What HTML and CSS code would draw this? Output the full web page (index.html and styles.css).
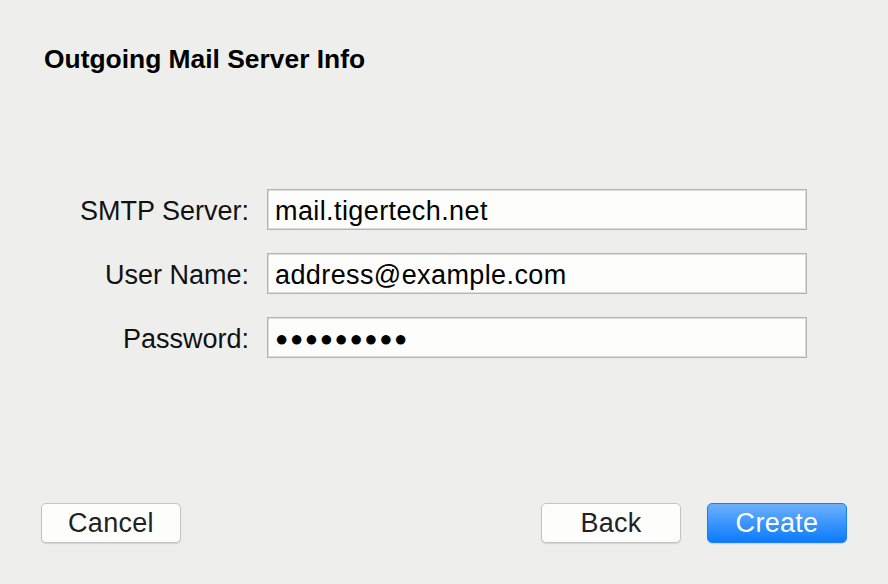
FILE: index.html
```html
<!DOCTYPE html>
<html lang="en">
<head>
    <meta charset="UTF-8">
    <title>Outgoing Mail Server Info</title>
    <link rel="stylesheet" href="styles.css">
</head>
<body>
    <div class="sheet">
        <h1 class="sheet-title">Outgoing Mail Server Info</h1>
        <div class="form">
            <label class="form-label">SMTP Server:</label>
            <div class="form-field">mail.tigertech.net</div>
            <label class="form-label">User Name:</label>
            <div class="form-field">address@example.com</div>
            <label class="form-label">Password:</label>
            <div class="form-field form-password">&#9679;&#9679;&#9679;&#9679;&#9679;&#9679;&#9679;&#9679;&#9679;</div>
        </div>
        <div class="sheet-buttons">
            <button class="btn">Cancel</button>
            <div class="btn-group">
                <button class="btn">Back</button>
                <button class="btn btn-primary">Create</button>
            </div>
        </div>
    </div>
</body>
</html>
```

FILE: styles.css
```css
html, body {
    margin: 0;
    background-color: #eeefed;
}
.sheet {
    width: 888px;
    height: 584px;
    box-sizing: border-box;
    padding: 42px 41px 0 44px;
    font-family: "Liberation Sans", Arial, sans-serif;
    color: #111;
}
.sheet-title {
    margin: 0;
    font-size: 26.4px;
    line-height: 34px;
    font-weight: bold;
    color: #000;
}
.form {
    margin-top: 113px;
    display: grid;
    grid-template-columns: 205px 540px;
    column-gap: 18px;
    row-gap: 23px;
    align-items: center;
}
.form-label {
    text-align: right;
    font-size: 27px;
    padding-top: 4px;
}
.form-field {
    height: 41px;
    box-sizing: border-box;
    border: 1px solid #b4b5b3;
    box-shadow: inset 0 0 0 1px #dcdcda;
    background-color: #fdfdfb;
    padding: 3px 7px 0;
    font-size: 27px;
    letter-spacing: 0.4px;
    line-height: 36px;
    color: #000;
}
.form-password {
    font-size: 22px;
    letter-spacing: 1.6px;
}
.sheet-buttons {
    margin-top: 145px;
    margin-left: -3px;
    display: flex;
    justify-content: space-between;
}
.btn-group {
    display: flex;
    gap: 26px;
}
.btn {
    width: 140px;
    height: 40px;
    border: 1px solid #c4c4c2;
    border-radius: 5px;
    background-color: #fdfdfb;
    box-shadow: 0 1px 1px rgba(0, 0, 0, 0.12);
    font-family: "Liberation Sans", Arial, sans-serif;
    font-size: 27px;
    letter-spacing: 0.3px;
    color: #222;
    padding: 0;
}
.btn-primary {
    border-color: #1a7ff5;
    background: linear-gradient(#6cb0fb, #0b7bfe);
    color: #fff;
}
```
